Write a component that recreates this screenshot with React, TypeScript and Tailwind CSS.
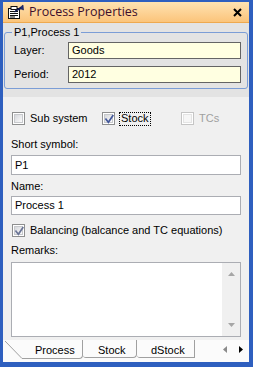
import React from "react";

const F = "font-['Liberation_Sans',Arial,sans-serif] text-[11px] leading-[13px] text-black";

function Check({ checked, disabled, grey }: { checked?: boolean; disabled?: boolean; grey?: boolean }) {
  return (
    <span
      className={`relative flex w-[13px] h-[13px] shrink-0 border p-[1px] bg-white ${
        disabled ? "border-[#c5c5c5]" : "border-[#8e8f8f]"
      }`}
    >
      <span
        className={`flex-1 border ${
          disabled
            ? "border-[#e4e4e4] bg-[#f6f6f6]"
            : "border-[#c7c9cc] bg-gradient-to-br from-[#d6d8dc] to-[#fbfbfb]"
        }`}
      />
      {checked && (
        <svg className="absolute left-0 top-0" width="13" height="13" viewBox="0 0 13 13">
          <path
            d="M3 6.2 L5.4 9.2 L9.8 2.8"
            fill="none"
            stroke={grey ? "#6b7596" : "#42579a"}
            strokeWidth="1.7"
            strokeLinecap="square"
          />
        </svg>
      )}
    </span>
  );
}

export default function App() {
  return (
    <div className={`${F} w-[253px] h-[367px] bg-[#2e5fbf] pt-[2px] pl-[3px] pr-[4px] pb-[5px] flex flex-col`}>
      {/* Title bar */}
      <div className="h-[21px] flex items-center pl-[4px] pr-[7px] bg-gradient-to-b from-[#fee3b2] to-[#fbc47a] border-b border-[#eea94f]">
        <svg width="17" height="16" viewBox="0 0 17 16" className="shrink-0">
          <rect x="1.5" y="4.5" width="11" height="10" fill="#fff" stroke="#111" />
          <rect x="4" y="2.5" width="6" height="3" fill="#fff" stroke="#111" />
          <line x1="3" y1="7.5" x2="11" y2="7.5" stroke="#111" />
          <line x1="3" y1="9.5" x2="11" y2="9.5" stroke="#111" />
          <line x1="3" y1="11.5" x2="11" y2="11.5" stroke="#111" />
          <line x1="3" y1="13" x2="8" y2="13" stroke="#111" />
          <path d="M8 7 L13 3.5 L16 1 L16.5 6 L14 5 Z" fill="#1e2f7a" stroke="#0f1a50" strokeWidth="0.6" />
          <line x1="7.5" y1="8" x2="14" y2="3.5" stroke="#0f1a50" strokeWidth="1.2" />
        </svg>
        <span className="ml-[5px] font-['Open_Sans','Noto_Sans',sans-serif] text-[12.5px] leading-[14px] text-[#3e0f2c]">
          Process Properties
        </span>
        <svg className="ml-auto" width="9" height="9" viewBox="0 0 9 9">
          <path d="M1 1 L8 8 M8 1 L1 8" stroke="#000" strokeWidth="2" />
        </svg>
      </div>

      {/* Group area */}
      <div className="h-[74px] bg-[#e3e3e3] pt-[3px] px-[1px]">
        <fieldset className="border border-[#7b9dd6] rounded-[3px] p-0 m-0">
          <legend className="ml-[7px] px-[2px] leading-[13px]">P1,Process 1</legend>
          <div className="pl-[9px] pr-[6px] pt-[3px] pb-[5px] flex flex-col gap-[7px]">
            <div className="flex items-center h-[17px]">
              <span className="w-[54px]">Layer:</span>
              <div className="flex-1 h-[17px] border border-[#646464] bg-[#ffffe1] pl-[3px] flex items-center">
                Goods
              </div>
            </div>
            <div className="flex items-center h-[17px]">
              <span className="w-[54px]">Period:</span>
              <div className="flex-1 h-[17px] border border-[#646464] bg-[#ffffe1] pl-[3px] flex items-center">
                2012
              </div>
            </div>
          </div>
        </fieldset>
      </div>

      {/* Main area */}
      <div className="flex-1 bg-[#f0f0f0] flex flex-col px-[8px] pt-[15px]">
        <div className="flex items-center h-[13px]">
          <div className="w-[91px] pl-[1px] flex items-center">
            <Check />
            <span className="ml-[5px]">Sub system</span>
          </div>
          <div className="w-[79px] flex items-center">
            <Check checked />
            <span className="ml-[4px] h-[14px] px-[1px] border border-dotted border-black flex items-center">Stock</span>
          </div>
          <div className="flex items-center">
            <Check disabled />
            <span className="ml-[5px] text-[#a0a0a0]">TCs</span>
          </div>
        </div>

        <div className="mt-[13px]">Short symbol:</div>
        <div className="mt-[4px] h-[20px] border border-[#abadb3] bg-white pl-[3px] flex items-center">P1</div>

        <div className="mt-[5px]">Name:</div>
        <div className="mt-[3px] h-[19px] border border-[#abadb3] bg-white pl-[3px] flex items-center">Process 1</div>

        <div className="mt-[9px] h-[13px] pl-[1px] flex items-center">
          <Check checked grey />
          <span className="ml-[5px]">Balancing (balcance and TC equations)</span>
        </div>

        <div className="mt-[7px]">Remarks:</div>
        <div className="mt-[5px] h-[75px] border border-[#abadb3] bg-white flex justify-end">
          <div className="w-[18px] bg-[#f0f0f0] flex flex-col items-center justify-between py-[9px]">
            <svg width="7" height="4" viewBox="0 0 7 4">
              <path d="M0 4 L3.5 0 L7 4 Z" fill="#a6a6a6" />
            </svg>
            <svg width="7" height="4" viewBox="0 0 7 4">
              <path d="M0 0 L3.5 4 L7 0 Z" fill="#a6a6a6" />
            </svg>
          </div>
        </div>
      </div>

      {/* Tab strip */}
      <div className="h-[22px] bg-[#fbfbfb] flex items-start pl-[2px] pr-[6px]">
        <svg width="17" height="19" viewBox="0 0 17 19" className="shrink-0">
          <line x1="0" y1="1" x2="17" y2="18.5" stroke="#a0a0a0" />
        </svg>
        <div className="w-[61px] h-[19px] border-b border-r border-[#a0a0a0] rounded-br-[4px] pt-[4px] pl-[13px]">
          Process
        </div>
        <div className="w-[54px] h-[18px] border-b border-r border-[#a0a0a0] rounded-bl-[3px] rounded-br-[4px] pt-[4px] pl-[15px]">
          Stock
        </div>
        <div className="w-[58px] h-[18px] border-b border-r border-[#a0a0a0] rounded-bl-[3px] pt-[4px] pl-[14px]">
          dStock
        </div>
        <div className="ml-auto mt-[6px] flex items-center gap-[12px]">
          <svg width="4" height="7" viewBox="0 0 4 7">
            <path d="M4 0 L0 3.5 L4 7 Z" fill="#8a8a8a" />
          </svg>
          <svg width="4" height="7" viewBox="0 0 4 7">
            <path d="M0 0 L4 3.5 L0 7 Z" fill="#000" />
          </svg>
        </div>
      </div>
    </div>
  );
}
